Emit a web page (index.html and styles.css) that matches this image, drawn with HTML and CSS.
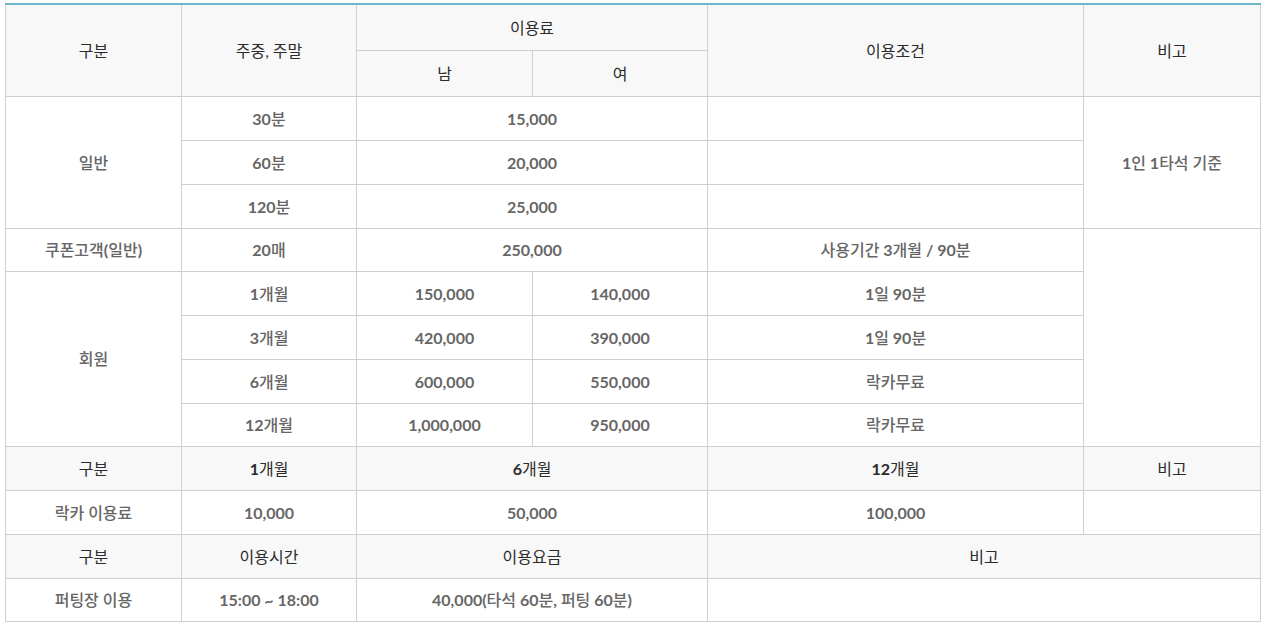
FILE: index.html
```html
<!DOCTYPE html>
<html lang="ko">
<head>
<meta charset="utf-8">
<link rel="stylesheet" href="styles.css">
</head>
<body>
<table class="price">
  <colgroup>
    <col class="c1"><col class="c2"><col class="c3"><col class="c4"><col class="c5"><col class="c6">
  </colgroup>
  <tr class="h">
    <th rowspan="2">구분</th>
    <th rowspan="2">주중, 주말</th>
    <th colspan="2">이용료</th>
    <th rowspan="2">이용조건</th>
    <th rowspan="2">비고</th>
  </tr>
  <tr class="h">
    <th>남</th>
    <th>여</th>
  </tr>
  <tr>
    <td rowspan="3"><span class="k">일반</span></td>
    <td>30<span class="k">분</span></td>
    <td colspan="2">15,000</td>
    <td></td>
    <td rowspan="3">1<span class="k">인</span> 1<span class="k">타석 기준</span></td>
  </tr>
  <tr>
    <td>60<span class="k">분</span></td>
    <td colspan="2">20,000</td>
    <td></td>
  </tr>
  <tr>
    <td>120<span class="k">분</span></td>
    <td colspan="2">25,000</td>
    <td></td>
  </tr>
  <tr class="s">
    <td><span class="k">쿠폰고객</span>(<span class="k">일반</span>)</td>
    <td>20<span class="k">매</span></td>
    <td colspan="2">250,000</td>
    <td><span class="k">사용기간</span> 3<span class="k">개월</span> / 90<span class="k">분</span></td>
    <td rowspan="5"></td>
  </tr>
  <tr>
    <td rowspan="4"><span class="k">회원</span></td>
    <td>1<span class="k">개월</span></td>
    <td>150,000</td>
    <td>140,000</td>
    <td>1<span class="k">일</span> 90<span class="k">분</span></td>
  </tr>
  <tr>
    <td>3<span class="k">개월</span></td>
    <td>420,000</td>
    <td>390,000</td>
    <td>1<span class="k">일</span> 90<span class="k">분</span></td>
  </tr>
  <tr>
    <td>6<span class="k">개월</span></td>
    <td>600,000</td>
    <td>550,000</td>
    <td><span class="k">락카무료</span></td>
  </tr>
  <tr class="s">
    <td>12<span class="k">개월</span></td>
    <td>1,000,000</td>
    <td>950,000</td>
    <td><span class="k">락카무료</span></td>
  </tr>
  <tr class="hr">
    <th>구분</th>
    <th><span class="n">1</span>개월</th>
    <th colspan="2"><span class="n">6</span>개월</th>
    <th><span class="n">12</span>개월</th>
    <th>비고</th>
  </tr>
  <tr>
    <td><span class="k">락카 이용료</span></td>
    <td>10,000</td>
    <td colspan="2">50,000</td>
    <td>100,000</td>
    <td></td>
  </tr>
  <tr class="hr">
    <th>구분</th>
    <th>이용시간</th>
    <th colspan="2">이용요금</th>
    <th colspan="2">비고</th>
  </tr>
  <tr class="s">
    <td><span class="k">퍼팅장 이용</span></td>
    <td>15:00 ~ 18:00</td>
    <td colspan="2">40,000(<span class="k">타석</span> 60<span class="k">분</span>, <span class="k">퍼팅</span> 60<span class="k">분</span>)</td>
    <td colspan="2"></td>
  </tr>
</table>
</body>
</html>
```

FILE: styles.css
```css
html, body {
  margin: 0;
  padding: 0;
  background: #fff;
}
body {
  padding: 3px 0 0 5px;
  font-family: Lato, "Noto Sans CJK KR", sans-serif;
  font-size: 16px;
}
.price {
  border-collapse: collapse;
  table-layout: fixed;
  width: 1255px;
  border-top: 2px solid #6db5c9;
}
.c1 { width: 176px; }
.c2 { width: 175px; }
.c3 { width: 176px; }
.c4 { width: 175px; }
.c5 { width: 376px; }
.c6 { width: 177px; }
.price th, .price td {
  border: 1px solid #cfcfcf;
  text-align: center;
  vertical-align: middle;
  padding: 0;
  line-height: 20px;
}
.price th {
  background: #f8f8f8;
  color: #2b2b2b;
  font-weight: 400;
}
.price th .n {
  font-weight: 700;
}
.price td {
  color: #666;
  font-weight: 700;
  height: 43px;
}
.price td .k {
  font-weight: 500;
}
.price tr.h th {
  height: 45px;
}
.price tr.hr th {
  height: 43px;
}
.price tr.s td {
  height: 42px;
}
```
